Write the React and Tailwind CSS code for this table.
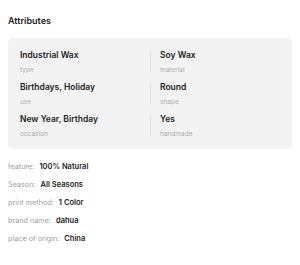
export default function App() {
  const cells = [
    ["Industrial Wax", "type", "Soy Wax", "material"],
    ["Birthdays, Holiday", "use", "Round", "shape"],
    ["New Year, Birthday", "occasion", "Yes", "handmade"],
  ];
  const list = [
    ["feature:", "100% Natural"],
    ["Season:", "All Seasons"],
    ["print method:", "1 Color"],
    ["brand name:", "dahua"],
    ["place of origin:", "China"],
  ];
  return (
    <div
      className="w-[300px] h-[265px] bg-white px-2 pt-[15px] text-[#222]"
      style={{ fontFamily: "Inter, 'Noto Sans', sans-serif" }}
    >
      <div className="text-[9px] leading-[12px] font-semibold">Attributes</div>
      <div className="mt-[11px] rounded-[5px] bg-[#f3f3f3] px-3 pt-[11px] pb-[13px]">
        <div className="grid grid-cols-2 gap-y-[9px]">
          {cells.map((r, i) => (
            <>
              <div key={"a" + i} className="flex flex-col h-[23px]">
                <div className="text-[8.5px] leading-[12px] font-semibold text-[#1c1c1c]">{r[0]}</div>
                <div className="mt-[4.5px] text-[6.5px] leading-[8px] text-[#aaa]">{r[1]}</div>
              </div>
              <div key={"b" + i} className="flex flex-col h-[23px] border-l border-[#e2e2e2] pl-[9px]">
                <div className="text-[8.5px] leading-[12px] font-semibold text-[#1c1c1c]">{r[2]}</div>
                <div className="mt-[4.5px] text-[6.5px] leading-[8px] text-[#aaa]">{r[3]}</div>
              </div>
            </>
          ))}
        </div>
      </div>
      <div className="mt-[9px] flex flex-col">
        {list.map(([k, v]) => (
          <div key={k} className="flex items-baseline gap-[5px] h-[18px] leading-[18px]">
            <span className="text-[7.25px] text-[#a0a0a0]">{k}</span>
            <span className="text-[7.5px] font-semibold text-[#1c1c1c]">{v}</span>
          </div>
        ))}
      </div>
    </div>
  );
}
